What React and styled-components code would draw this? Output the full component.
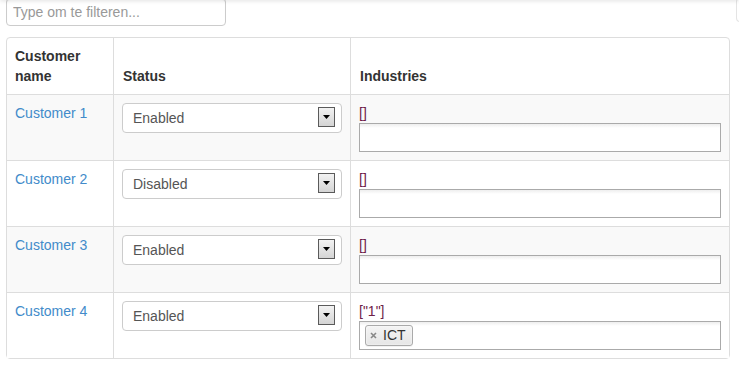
import { styled, createGlobalStyle } from 'styled-components';

const GlobalStyle = createGlobalStyle`
    html, body {
        margin: 0;
        padding: 0;
        background: #fff;
        overflow: hidden;
    }
    body {
        font-family: "Liberation Sans", Arial, Helvetica, sans-serif;
        font-size: 14px;
        line-height: 20px;
        color: #333;
    }
`;

const customers = [
    { name: 'Customer 1', status: 'Enabled', value: '[]', tags: [] },
    { name: 'Customer 2', status: 'Disabled', value: '[]', tags: [] },
    { name: 'Customer 3', status: 'Enabled', value: '[]', tags: [] },
    { name: 'Customer 4', status: 'Enabled', value: '["1"]', tags: ['ICT'] },
];

function StatusSelect(props){
    return(
        <SelectWrap>
            <Select defaultValue={props.value}>
                <option>Enabled</option>
                <option>Disabled</option>
            </Select>
            <Arrow>
                <svg width="7" height="4" viewBox="0 0 7 4">
                    <path d="M0 0h7L3.5 4z" fill="#000" />
                </svg>
            </Arrow>
        </SelectWrap>
    );
}

function TagInput(props){
    return(
        <TagBox>
            {props.tags.map((t) => (
                <Tag key={t}>
                    <TagClose>
                        <svg width="7" height="7" viewBox="0 0 7 7">
                            <path d="M1 1l5 5M6 1L1 6" stroke="#888" strokeWidth="1.6" />
                        </svg>
                    </TagClose>
                    {t}
                </Tag>
            ))}
        </TagBox>
    );
}

function App(){
    return(
        <Page>
            <GlobalStyle />
            <TopShadow />
            <FilterBar>
                <Filter placeholder="Type om te filteren..." />
                <OtherField />
            </FilterBar>
            <Table>
                <thead>
                    <tr>
                        <Th $width={106}>Customer<br />name</Th>
                        <Th $width={237}>Status</Th>
                        <Th>Industries</Th>
                    </tr>
                </thead>
                <tbody>
                    {customers.map((c, i) => (
                        <Row key={c.name} $striped={i % 2 === 0}>
                            <Td><CustomerLink href="#">{c.name}</CustomerLink></Td>
                            <Td><StatusSelect value={c.status} /></Td>
                            <Td>
                                <Raw>{c.value}</Raw>
                                <TagInput tags={c.tags} />
                            </Td>
                        </Row>
                    ))}
                </tbody>
            </Table>
        </Page>
    );
}

const Page = styled.div`
    padding: 0 0 0 6px;
`;

const TopShadow = styled.div`
    position: fixed;
    top: -4px;
    left: 0;
    right: 0;
    height: 4px;
    box-shadow: 0 1px 4px rgba(0, 0, 0, 0.12);
    z-index: 5;
`;

const FilterBar = styled.div`
    display: flex;
    gap: 510px;
    margin-top: -2px;
    margin-bottom: 11px;
`;

const Filter = styled.input`
    box-sizing: border-box;
    flex: 0 0 220px;
    width: 220px;
    height: 28px;
    padding: 4px 6px;
    border: 1px solid #ccc;
    border-radius: 4px;
    font-family: inherit;
    font-size: 14px;
    color: #555;
    box-shadow: inset 0 1px 1px rgba(0, 0, 0, 0.075);
    outline: none;
    &::placeholder {
        color: #999;
    }
`;

const OtherField = styled.div`
    flex: 0 0 3px;
    height: 22px;
    border: 1px solid #e4e4e4;
    border-right: none;
    border-radius: 4px 0 0 4px;
`;

const Table = styled.table`
    width: 724px;
    border-collapse: separate;
    border-spacing: 0;
    border: 1px solid #ddd;
    border-radius: 4px;
    table-layout: fixed;
`;

const Th = styled.th`
    box-sizing: border-box;
    width: ${(p) => (p.$width ? p.$width + 'px' : 'auto')};
    padding: 8px 8px 8px 9px;
    text-align: left;
    vertical-align: bottom;
    font-weight: bold;
    border-left: 1px solid #ddd;
    &:first-child {
        border-left: none;
        padding-left: 8px;
    }
`;

const Row = styled.tr`
    background: ${(p) => (p.$striped ? '#f9f9f9' : '#fff')};
`;

const Td = styled.td`
    height: 49px;
    padding: 8px;
    vertical-align: top;
    border-top: 1px solid #ddd;
    border-left: 1px solid #ddd;
    &:first-child {
        border-left: none;
    }
`;

const CustomerLink = styled.a`
    color: #428bca;
    text-decoration: none;
`;

const SelectWrap = styled.div`
    position: relative;
    width: 100%;
`;

const Select = styled.select`
    box-sizing: border-box;
    display: block;
    width: 100%;
    height: 30px;
    padding: 0 28px 0 10px;
    border: 1px solid #ccc;
    border-radius: 4px;
    background: #fff;
    font-family: inherit;
    font-size: 14px;
    color: #555;
    appearance: none;
    outline: none;
`;

const Arrow = styled.span`
    position: absolute;
    top: 4px;
    right: 7px;
    box-sizing: border-box;
    width: 17px;
    height: 20px;
    display: flex;
    align-items: center;
    justify-content: center;
    border: 1px solid #5a5a5a;
    background: linear-gradient(#f2f2f2, #d4d4d4);
    pointer-events: none;
`;

const Raw = styled.div`
    color: #6e2248;
    height: 20px;
`;

const TagBox = styled.div`
    box-sizing: border-box;
    height: 29px;
    padding: 3px 5px;
    display: flex;
    align-items: center;
    gap: 5px;
    border: 1px solid #aaa;
    background: linear-gradient(#eee 0, #fff 4px);
`;

const Tag = styled.span`
    box-sizing: border-box;
    height: 21px;
    display: inline-flex;
    align-items: center;
    gap: 6px;
    padding: 0 6px 0 4px;
    border: 1px solid #aaa;
    border-radius: 3px;
    background: linear-gradient(#f4f4f4, #e6e6e6);
    box-shadow: 0 0 2px #fff inset, 0 1px 0 rgba(0, 0, 0, 0.05);
    color: #333;
    font-size: 14px;
    line-height: 13px;
`;

const TagClose = styled.span`
    display: inline-flex;
`;

export default App;
